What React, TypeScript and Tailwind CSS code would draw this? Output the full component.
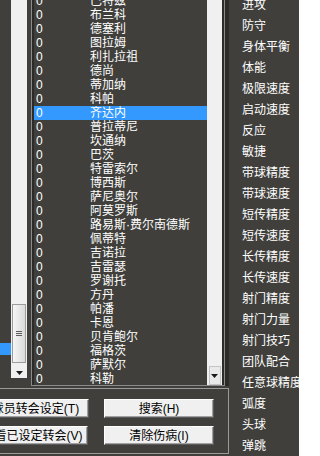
import React from "react";

const names = [
  "巴特兹", "布兰科", "德塞利", "图拉姆", "利扎拉祖", "德尚", "蒂加纳", "科帕", "齐达内",
  "普拉蒂尼", "坎通纳", "巴茨", "特雷索尔", "博西斯", "萨尼奥尔", "阿莫罗斯",
  "路易斯·费尔南德斯", "佩蒂特", "吉诺拉", "吉雷瑟", "罗谢托", "方丹", "帕潘", "卡恩",
  "贝肯鲍尔", "福格茨", "萨默尔", "科勒",
];

const labels = [
  "进攻", "防守", "身体平衡", "体能", "极限速度", "启动速度", "反应", "敏捷",
  "带球精度", "带球速度", "短传精度", "短传速度", "长传精度", "长传速度",
  "射门精度", "射门力量", "射门技巧", "团队配合", "任意球精度", "弧度", "头球", "弹跳",
];

function DownArrow() {
  return (
    <svg width="7" height="4" viewBox="0 0 7 4">
      <path d="M0 0 H7 L3.5 4 Z" fill="#1a1a1a" />
    </svg>
  );
}

function Btn({ children, className }: { children: React.ReactNode; className: string }) {
  return (
    <div
      className={
        "h-[19px] shrink-0 flex items-center justify-center whitespace-nowrap text-black bg-[#f0f0f0] border border-t-white border-l-white border-b-[#5a5a5a] border-r-[#5a5a5a] shadow-[inset_-1px_-1px_0_#a0a0a0] leading-none " +
        className
      }
    >
      {children}
    </div>
  );
}

export default function App() {
  return (
    <div className="w-[299px] h-[456px] overflow-hidden bg-[#403f3b] flex text-[12px] text-white font-[family-name:'Liberation_Sans','Noto_Sans_CJK_SC',sans-serif]">
      {/* left column */}
      <div className="w-[229px] shrink-0 flex flex-col">
        {/* top row */}
        <div className="h-[386px] flex shrink-0">
          {/* left list pane (clipped) */}
          <div className="w-[27px] h-[378px] flex shrink-0">
            <div className="w-[11px] flex flex-col">
              <div className="mt-[343px] h-[12px] bg-[#3399ff]" />
            </div>
            <div className="w-[16px] bg-[#f0f0f0] flex flex-col">
              <div className="mt-[304px] h-[59px] mx-[1px] border border-[#9c9c9c] bg-gradient-to-r from-[#f6f6f6] to-[#dadada] flex flex-col items-center justify-center gap-[1px]">
                <div className="w-[6px] h-[1px] bg-[#5c5c5c]" />
                <div className="w-[6px] h-[1px] bg-[#5c5c5c]" />
                <div className="w-[6px] h-[1px] bg-[#5c5c5c]" />
              </div>
              <div className="flex-1 flex items-end justify-center pb-[3px]">
                <DownArrow />
              </div>
            </div>
          </div>

          {/* middle list pane */}
          <div className="ml-[4px] w-[194px] h-[386px] flex border-l border-b border-r border-[#8a8a8a] shrink-0">
            <div className="flex-1 flex border-l-[2px] border-r-[2px] border-[#2c2b28] overflow-hidden">
              <div className="w-[173px] overflow-hidden">
                <div className="mt-[-6px] flex flex-col">
                  {names.map((n, i) => (
                    <div
                      key={i}
                      className={
                        "h-[14px] shrink-0 flex items-center leading-none whitespace-nowrap " +
                        (i === 8 ? "bg-[#3399ff]" : "")
                      }
                    >
                      <span className="w-[56px] pl-[2px] shrink-0">0</span>
                      <span>{n}</span>
                    </div>
                  ))}
                </div>
              </div>
              <div className="w-[15px] bg-[#f0f0f0] flex flex-col justify-end items-center">
                <div className="w-[12px] h-[19px] border border-[#c4c4c4] bg-[#e9e9e9] flex items-center justify-center">
                  <DownArrow />
                </div>
              </div>
            </div>
          </div>
          <div className="w-[4px] bg-[#2c2b28]" />
        </div>

        {/* buttons group */}
        <div className="mt-[2px] border-t border-r border-b border-[#9a9a9a] pt-[10px] pb-[8px] flex flex-col gap-[8px]">
          <div className="flex">
            <Btn className="ml-[-18px] w-[107px]">球员转会设定(T)</Btn>
            <Btn className="ml-[15px] w-[110px]">搜索(H)</Btn>
          </div>
          <div className="flex">
            <Btn className="ml-[-23px] w-[111px]">查看已设定转会(V)</Btn>
            <Btn className="ml-[16px] w-[110px]">清除伤病(I)</Btn>
          </div>
        </div>
      </div>

      {/* right column */}
      <div className="flex-1 overflow-hidden">
        <div className="mt-[-6px] flex flex-col">
          {labels.map((l, i) => (
            <div key={i} className="h-[21px] shrink-0 flex items-center pl-[13px] whitespace-nowrap leading-none">
              {l}
            </div>
          ))}
        </div>
      </div>
    </div>
  );
}
